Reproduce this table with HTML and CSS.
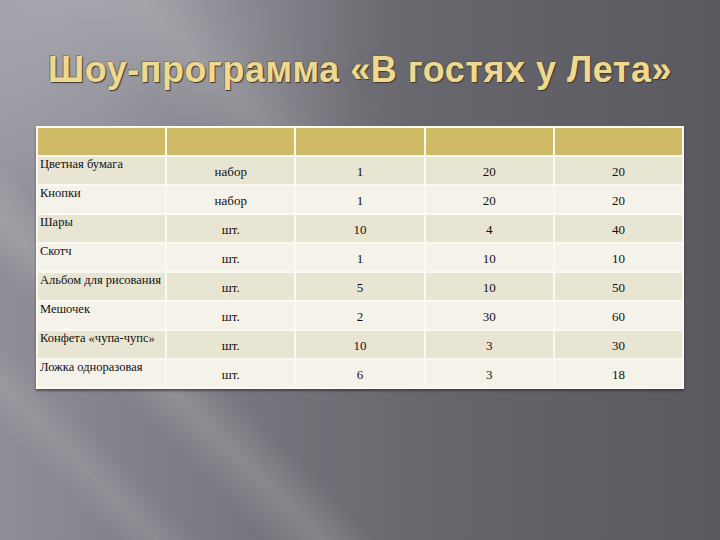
FILE: index.html
```html
<!DOCTYPE html>
<html lang="ru">
<head>
<meta charset="utf-8">
<title>Шоу-программа</title>
<link rel="stylesheet" href="styles.css">
</head>
<body>
<div class="slide">
  <h1 class="title">Шоу-программа «В гостях у Лета»</h1>
  <table class="grid">
    <tr class="head"><td></td><td></td><td></td><td></td><td></td></tr>
    <tr class="odd"><td class="name">Цветная бумага</td><td>набор</td><td>1</td><td>20</td><td>20</td></tr>
    <tr class="even"><td class="name">Кнопки</td><td>набор</td><td>1</td><td>20</td><td>20</td></tr>
    <tr class="odd"><td class="name">Шары</td><td>шт.</td><td>10</td><td>4</td><td>40</td></tr>
    <tr class="even"><td class="name">Скотч</td><td>шт.</td><td>1</td><td>10</td><td>10</td></tr>
    <tr class="odd"><td class="name">Альбом для рисования</td><td>шт.</td><td>5</td><td>10</td><td>50</td></tr>
    <tr class="even"><td class="name">Мешочек</td><td>шт.</td><td>2</td><td>30</td><td>60</td></tr>
    <tr class="odd"><td class="name">Конфета «чупа-чупс»</td><td>шт.</td><td>10</td><td>3</td><td>30</td></tr>
    <tr class="even"><td class="name">Ложка одноразовая</td><td>шт.</td><td>6</td><td>3</td><td>18</td></tr>
  </table>
</div>
</body>
</html>
```
FILE: styles.css
```css
html, body {
  margin: 0;
  padding: 0;
}
.slide {
  width: 720px;
  height: 540px;
  overflow: hidden;
  background-color: #5b5a61;
  background-image:
    radial-gradient(ellipse 330px 260px at 60px 0, rgba(190,190,198,0.55) 0%, rgba(190,190,198,0.25) 55%, transparent 100%),
    linear-gradient(45deg, transparent 9%, rgba(255,255,255,0.10) 12.5%, transparent 16%, transparent 21%, rgba(255,255,255,0.14) 25.5%, transparent 30%),
    linear-gradient(45deg, transparent 28%, rgba(255,255,255,0.14) 37%, rgba(255,255,255,0.04) 44%, transparent 52%),
    linear-gradient(90deg, #8f8e96 0%, #7a7981 30%, #67666d 60%, #5a5960 100%);
  background-size: 720px 540px, 720px 540px, 720px 200px, 720px 540px;
  background-repeat: no-repeat;
  padding-top: 50px;
  box-sizing: border-box;
}
.title {
  margin: 0;
  font-family: "Liberation Sans", Arial, sans-serif;
  font-weight: bold;
  font-size: 36px;
  line-height: 40px;
  letter-spacing: 0.5px;
  text-align: center;
  color: #eed98f;
  text-shadow: 1px 1px 1px #3b372f, -1px -1px 0 rgba(90,80,60,0.45);
}
.grid {
  margin: 36px 0 0 36px;
  width: 648px;
  border-collapse: separate;
  border-spacing: 2px;
  background: #fbf9f1;
  table-layout: fixed;
  box-shadow: 0 2px 2px rgba(40,40,45,0.6);
  font-family: "Liberation Serif", "Times New Roman", serif;
  color: #111;
}
.grid td {
  height: 27px;
  padding: 7px 0 0 0;
  box-sizing: border-box;
  vertical-align: top;
  text-align: center;
  font-size: 13px;
  line-height: 15px;
}
.grid .head td {
  background: #cfba66;
}
.grid .odd td {
  background: #e9e5d3;
}
.grid .even td {
  background: #f5f2ea;
}
.grid td.name {
  text-align: left;
  font-size: 12.5px;
  line-height: 14px;
  padding: 0 0 0 2px;
  white-space: nowrap;
}
```
